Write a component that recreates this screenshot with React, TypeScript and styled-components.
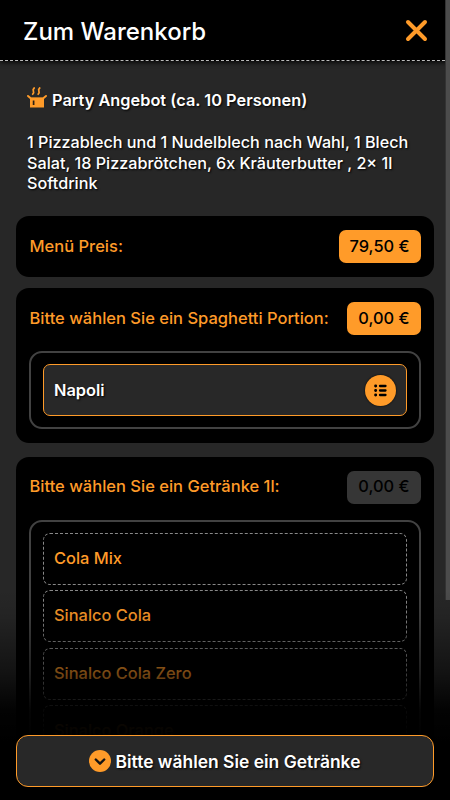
import React from 'react';
import styled, { createGlobalStyle } from 'styled-components';

const orange = '#ff9b29';

const GlobalStyle = createGlobalStyle`
  * { box-sizing: border-box; }
  html, body { margin: 0; background: #272727; }
  body { overflow: hidden; font-family: Inter, "Liberation Sans", sans-serif; }
`;

const Page = styled.div`
  position: relative;
  display: flex;
  flex-direction: column;
  width: 450px;
  height: 800px;
  overflow: hidden;
  background: #272727;
  color: #fff;
`;

const Header = styled.header`
  flex: none;
  display: flex;
  align-items: center;
  justify-content: space-between;
  height: 61px;
  padding: 1px 22px 0 23px;
  background: #000;
  border-bottom: 1px dashed #bbb;
  box-shadow: 0 1px 5px #000;
`;

const Title = styled.h1`
  margin: 0;
  padding-top: 2px;
  font-size: 24px;
  line-height: 30px;
  font-weight: 500;
`;

const CloseButton = styled.button`
  display: flex;
  padding: 0;
  border: 0;
  background: none;
`;

const Content = styled.main`
  flex: 1;
  min-height: 0;
  overflow: hidden;
  padding: 27px 16px 0;
`;

const Offer = styled.section`
  height: 128px;
  padding-left: 11px;
`;

const OfferTitle = styled.h2`
  display: flex;
  align-items: center;
  gap: 5px;
  height: 24px;
  margin: 0;
  font-size: 16.35px;
  line-height: 20px;
  font-weight: 600;
  text-shadow: 1px 1px 2px #000;

  svg { margin-bottom: 5px; }
`;

const Description = styled.p`
  width: 390px;
  margin: 20px 0 0;
  font-size: 16.2px;
  line-height: 20.6px;
  font-weight: 500;
  text-shadow: 1px 1px 2px #000;
`;

const Card = styled.section<{ $height: number; $gap?: number }>`
  height: ${({ $height }) => $height}px;
  margin-bottom: ${({ $gap = 0 }) => $gap}px;
  padding: 14px 13.5px 0;
  border-radius: 13px;
  background: #000;
`;

const CardHeader = styled.div`
  display: flex;
  align-items: center;
  justify-content: space-between;
  height: 33px;
`;

const Label = styled.span`
  padding-bottom: 2px;
  color: ${orange};
  font-size: 16.5px;
  line-height: 20px;
  font-weight: 500;
`;

const Price = styled.span<{ $muted?: boolean }>`
  display: flex;
  align-items: center;
  height: 33px;
  padding: 0 11px 2px;
  border-radius: 7px;
  background: ${({ $muted }) => ($muted ? '#363636' : orange)};
  color: #000;
  font-size: 16.4px;
  font-weight: 500;
`;

const Options = styled.div<{ $height: number }>`
  display: flex;
  flex-direction: column;
  gap: 5.6px;
  height: ${({ $height }) => $height}px;
  margin: 16px 0 0 -0.5px;
  padding: 11px 12px;
  border: 2px solid #424242;
  border-radius: 13px;
`;

const Option = styled.div<{ $selected?: boolean }>`
  flex: none;
  display: flex;
  align-items: center;
  justify-content: space-between;
  height: 52px;
  padding: ${({ $selected }) => ($selected ? '0 10px' : '0 10px 2px')};
  border: ${({ $selected }) => ($selected ? `1px solid ${orange}` : '1px dashed #888')};
  border-radius: 7px;
  background: ${({ $selected }) => ($selected ? '#282828' : '#000')};
  color: ${({ $selected }) => ($selected ? '#fff' : orange)};
  font-size: 16.4px;
  font-weight: ${({ $selected }) => ($selected ? 600 : 500)};
  text-shadow: ${({ $selected }) => ($selected ? '1px 1px 2px #000' : 'none')};
`;

const ListBadge = styled.span`
  display: flex;
  align-items: center;
  justify-content: center;
  width: 31px;
  height: 31px;
  border-radius: 50%;
  background: ${orange};
  box-shadow: 0 0 2px #000;
`;

const BottomFade = styled.div`
  position: absolute;
  inset: 590px 0 0;
  background: linear-gradient(to bottom, transparent, rgba(0, 0, 0, 0.1) 27px, rgba(0, 0, 0, 0.52) 82px, rgba(0, 0, 0, 0.93) 120px, #000 152px);
`;

const ActionButton = styled.button`
  position: absolute;
  left: 16px;
  right: 16px;
  bottom: 13px;
  height: 52px;
  display: flex;
  align-items: center;
  justify-content: center;
  gap: 5px;
  padding: 0 1px 0 0;
  border: 1px solid ${orange};
  border-radius: 12px;
  background: #282828;
  color: #fff;
  font: 600 17.45px Inter, "Liberation Sans", sans-serif;
  text-shadow: 1px 1px 2px #000;
`;

const ScrollThumb = styled.div`
  position: absolute;
  top: 0;
  right: 0;
  width: 5px;
  height: 600px;
  background: #4c4c4c;
  border-left: 1px solid #333;
`;

const CloseIcon = () => (
  <svg width="23" height="23" viewBox="0 0 23 23" fill="none" stroke={orange} strokeWidth="4" strokeLinecap="round">
    <path d="m3 3 17 17M20 3 3 20" />
  </svg>
);

const HotBoxIcon = () => (
  <svg width="20" height="21" viewBox="0 0 20 21" fill="none" overflow="visible">
    <path d="M7.2 1C4 3.5 8.7 4.5 5.7 7.2M12.7 1C9.5 3.5 14.2 4.5 11.2 7.2" stroke={orange} strokeWidth="1.8" strokeLinecap="round" />
    <path d="m1 9 3 2.5h12L19 9" stroke={orange} strokeWidth="2" strokeLinecap="round" />
    <path d="M3 10.7h14V20.5H3z" fill={orange} />
    <path d="M6.6 13.5v4.5" stroke="#2b2013" strokeWidth="1.7" />
  </svg>
);

const ListIcon = () => (
  <svg width="13" height="13" viewBox="0 0 13 13" fill="none" stroke="#000" strokeWidth="2.3" strokeLinecap="round">
    <path d="M6 2h5.5M6 6.5h5.5M6 11h5.5" />
    <path d="M1.6 2h.1M1.6 6.5h.1M1.6 11h.1" strokeWidth="2.9" />
  </svg>
);

const ChevronBadge = () => (
  <svg width="22" height="22" viewBox="0 0 22 22" fill="none">
    <circle cx="11" cy="11" r="11" fill={orange} />
    <path d="m6.8 9.5 4.2 4.2 4.2-4.2" stroke="#141414" strokeWidth="2.4" strokeLinecap="round" strokeLinejoin="round" />
  </svg>
);

const drinks = ['Cola Mix', 'Sinalco Cola', 'Sinalco Cola Zero', 'Sinalco Orange'];

export default function App() {
  return (
    <>
      <GlobalStyle />
      <Page>
        <Header>
          <Title>Zum Warenkorb</Title>
          <CloseButton aria-label="Schließen"><CloseIcon /></CloseButton>
        </Header>
        <Content>
          <Offer>
            <OfferTitle><HotBoxIcon />Party Angebot (ca. 10 Personen)</OfferTitle>
            <Description>
              1 Pizzablech und 1 Nudelblech nach Wahl, 1 Blech Salat, 18 Pizzabrötchen, 6x Kräuterbutter , 2x 1l Softdrink
            </Description>
          </Offer>
          <Card $height={61} $gap={11}>
            <CardHeader><Label>Menü Preis:</Label><Price>79,50 €</Price></CardHeader>
          </Card>
          <Card $height={155} $gap={13.7}>
            <CardHeader><Label>Bitte wählen Sie ein Spaghetti Portion:</Label><Price>0,00 €</Price></CardHeader>
            <Options $height={78}>
              <Option $selected>Napoli<ListBadge><ListIcon /></ListBadge></Option>
            </Options>
          </Card>
          <Card $height={420}>
            <CardHeader><Label>Bitte wählen Sie ein Getränke 1l:</Label><Price $muted>0,00 €</Price></CardHeader>
            <Options $height={330}>
              {drinks.map((drink) => <Option key={drink}>{drink}</Option>)}
            </Options>
          </Card>
        </Content>
        <ScrollThumb />
        <BottomFade />
        <ActionButton><ChevronBadge />Bitte wählen Sie ein Getränke</ActionButton>
      </Page>
    </>
  );
}
